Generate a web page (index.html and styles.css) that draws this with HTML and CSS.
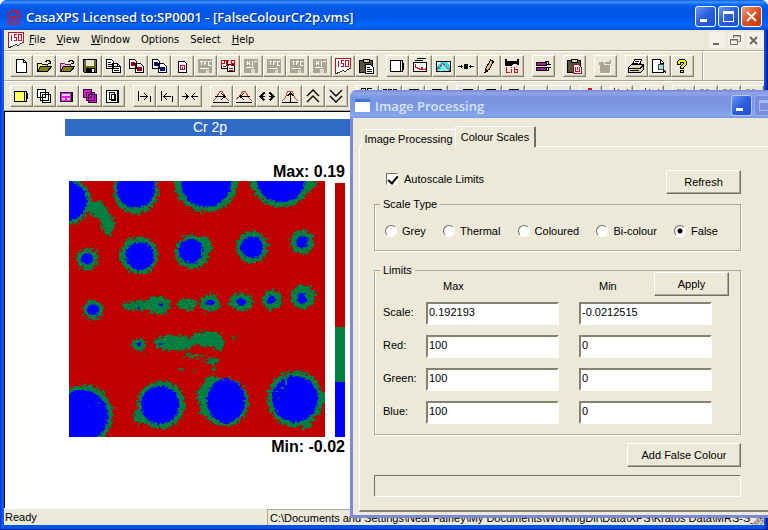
FILE: index.html
```
<!DOCTYPE html>
<html lang="en">
<head>
<meta charset="utf-8">
<title>CasaXPS</title>
<link rel="stylesheet" href="styles.css">
</head>
<body>
<svg class="defs" aria-hidden="true">
  <symbol id="new" viewBox="0 0 16 16"><path d="M3.500 1.500h7l3 3v10h-10z" fill="#fff" stroke="#000"/><path d="M10.500 1.500v3h3" fill="none" stroke="#000"/></symbol>
  <symbol id="open" viewBox="0 0 16 16"><path d="M1.500 13.500v-8h4l1 1h5v3" fill="#ffff80" stroke="#000"/><path d="M1.500 13.500l3-5h11l-4 5z" fill="#808000" stroke="#000"/><path d="M9 3.500h1l1-1h2l1 1v2M12 5.500h3M14.500 3v3" fill="none" stroke="#000"/></symbol>
  <symbol id="openp" viewBox="0 0 16 16"><path d="M1.500 13.500v-8h4l1 1h5v3" fill="#f6a8e8" stroke="#702070"/><path d="M1.500 13.500l3-5h11l-4 5z" fill="#808000" stroke="#000"/><path d="M9 3.500h1l1-1h2l1 1v2M12 5.500h3M14.500 3v3" fill="none" stroke="#000"/></symbol>
  <symbol id="save" viewBox="0 0 16 16"><path d="M1.500 1.500h13v13h-12l-1-1z" fill="#6b6b10" stroke="#000"/><path d="M4 2h8v6h-8z" fill="#e8e6d0"/><path d="M4 10h9v5h-9z" fill="#000"/><path d="M10 11h2v3h-2z" fill="#fff"/></symbol>
  <symbol id="copy" viewBox="0 0 16 16"><path d="M1.500 1.500h5l2 2v7h-7zM7.500 5.500h5l3 3v6h-8z" fill="#fff" stroke="#000"/><path d="M3 4.500h3M3 6.500h4M3 8.500h4M9 8.500h3M9 10.500h5M9 12.500h5M12.500 6v2.500h3" stroke="#000" fill="none"/></symbol>
  <symbol id="copyr" viewBox="0 0 16 16"><path d="M1.500 1.500h5l2 2v7h-7zM7.500 5.500h5l3 3v6h-8z" fill="#fff" stroke="#000"/><path d="M3 4h4v4h-4zM9 9h5v4h-5z" fill="#a00010"/></symbol>
  <symbol id="copyb" viewBox="0 0 16 16"><path d="M1.500 1.500h5l2 2v7h-7zM7.500 5.500h5l3 3v6h-8z" fill="#fff" stroke="#000"/><path d="M3 4h4v4h-4zM9 9h5v4h-5z" fill="#001080"/></symbol>
  <symbol id="doc" viewBox="0 0 16 16"><path d="M4.500 3.500h6l2 2v9h-8z" fill="#fff" stroke="#000"/><path d="M6.500 7.500h4v4h-4z" fill="none" stroke="#c00020"/><path d="M8 9h1v2h-1z" fill="#c00020"/></symbol>
  <symbol id="off" viewBox="0 0 16 16"><path d="M1 1h14v14h-14z" fill="#a9a694"/><path d="M3 3.500h3M4.500 3v4M7.500 7v-3.500h2M7 5.500h2M11 3.500h2.500M11.500 3v4.500h2M3 10.500h9" fill="none" stroke="#fff"/><path d="M9 12h3v3h-3z" fill="#dcd9c8"/></symbol>
  <symbol id="off2" viewBox="0 0 16 16"><path d="M1 1h14v14h-14z" fill="#a9a694"/><path d="M4.500 3v4M6.500 3v4M4 5.500h3M9.500 3v4.500M11 3.500h3M3 9.500h8" fill="none" stroke="#fff"/><path d="M8 11h4v4h-4z" fill="#dcd9c8"/></symbol>
  <symbol id="pcb" viewBox="0 0 16 16"><path d="M1.500 2.500h6v8h-6zM7.500 6.500h7v7h-7z" fill="#fff" stroke="#000"/><path d="M1.500 8v-5.500h3v3h-3M9 2.500h-2.500v5h2.500M11.500 8v-5.500h3v5h-3M11.500 5.500h3" fill="none" stroke="#d80010"/><path d="M9 10.500h4M3 8.500h3M9 12.500h4" stroke="#a00010"/></symbol>
  <symbol id="iso" viewBox="0 0 16 16"><path d="M.500 .500h15v10l-3 1-2 2-3-1-3 3-4-1z" fill="#fff"/><path d="M.500 15v-14.500h15v10" fill="none" stroke="#c01020"/><path d="M15.500 10.500l-3 1-2 2-3-1-3 2-4 1" fill="none" stroke="#333"/><path d="M3.500 2.500v6M8.500 2.500h-2.500v2.500h2v3h-2.500M10.500 2.500h3v5.500h-3z" fill="none" stroke="#d01028"/></symbol>
  <symbol id="paste" viewBox="0 0 16 16"><path d="M1.500 2.500h13v12h-13z" fill="#55543c" stroke="#000"/><path d="M5 1h6v3h-6z" fill="#ddd98c" stroke="#000"/><path d="M7.500 6.500h5l3 3v6h-8z" fill="#fff" stroke="#000"/><path d="M9 9.500h3M9 11.500h5M9 13.500h5" stroke="#000"/></symbol>
  <symbol id="pastem" viewBox="0 0 16 16"><path d="M1.500 2.500h13v12h-13z" fill="#55543c" stroke="#000"/><path d="M5 1h6v3h-6z" fill="#ddd98c" stroke="#000"/><path d="M7.500 6.500h5l3 3v6h-8z" fill="#fff" stroke="#a01020"/><path d="M9.500 8.500v5h4v-5M11.500 9v3" fill="none" stroke="#d01020"/></symbol>
  <symbol id="page" viewBox="0 0 16 16"><path d="M1.500 2.500h12v11h-12z" fill="#fff" stroke="#000"/><path d="M11.500 3v10M13.500 5h1v6h-1" fill="none" stroke="#000"/></symbol>
  <symbol id="chart" viewBox="0 0 16 16"><path d="M1.500 4.500h13v9h-13z" fill="#fff" stroke="#000"/><path d="M3 2.500h8M5 .500h9" stroke="#000"/><path d="M3.500 6v3h2v1h2v1h2v-2h1v2h3v-1" fill="none" stroke="#d01020"/></symbol>
  <symbol id="peak" viewBox="0 0 16 16"><path d="M1.500 3.500h14v10h-14z" fill="#20e0e8" stroke="#000"/><path d="M2 13l4-2 2-6 2 0 2 6 3 2z" fill="#80f0e8"/><path d="M2 11l3-2 3-4 3 4 4 4" stroke="#b04060" fill="none"/><path d="M2 4h4l-4 4zM15 4h-4l4 4z" fill="#d8fff8"/></symbol>
  <symbol id="dots" viewBox="0 0 16 16"><path d="M0 8.500h5M11 8.500h5M3.500 7v3M12.500 7v3" stroke="#000"/><path d="M6 6h4v5h-4z"/></symbol>
  <symbol id="pencil" viewBox="0 0 16 16"><path d="M4.500 11l5-9 3 1.500-5 9-3.500 2z" fill="#f0c060" stroke="#000"/><path d="M4 14v-3l3 1zM9 2h3v2z" fill="#000"/></symbol>
  <symbol id="lib" viewBox="0 0 16 16"><path d="M1 1h2v2h10v-2h2v6h-2v-1h-3l-3 2h-6z"/><path d="M2.500 9v5.500h3M7.500 11v4M7.500 9v1M10.500 9v5.500h3v-3h-3" fill="none" stroke="#d01020"/></symbol>
  <symbol id="batch" viewBox="0 0 16 16"><path d="M1.500 4.500h10v3h-10zM1.500 9.500h10v3h-10z" fill="#a020a0" stroke="#000"/><path d="M10 3.500h3v3M15.500 6h-4M13.500 10v2.500h-2M12 9.500h4" fill="none" stroke="#000"/></symbol>
  <symbol id="gift" viewBox="0 0 16 16"><path d="M3 7h10v8h-10zM2 4h5v3h-5zM8 4h3l3-3v5h-6z" fill="#a9a694"/><path d="M13 8v7h-9" fill="none" stroke="#fff"/></symbol>
  <symbol id="print" viewBox="0 0 16 16"><path d="M4.500 7l2-5.500h7l-2 5.500z" fill="#fff" stroke="#000"/><path d="M.500 9.500l3-3h12v5l-3 3h-12z" fill="#d8d4c0" stroke="#000"/><path d="M1 10.500h11l3-3M2 12.500h9M7 3.500h4M6 5.500h4" fill="none" stroke="#000"/><path d="M8 11h2v1h-2z" fill="#e8e000"/></symbol>
  <symbol id="preview" viewBox="0 0 16 16"><path d="M1.500 1.500h8l3 3v10h-11z" fill="#fff" stroke="#000"/><circle cx="10" cy="9" r="3" fill="#a0e0e0" stroke="#444"/><path d="M12 11l3 4M9.500 2v3h3" stroke="#000" fill="none"/></symbol>
  <symbol id="help" viewBox="0 0 16 16"><path d="M3.500 6.500v-3l2-2h5l2 2v3l-3 3v1h-3v-2l3-3v-1h-3v2zM6.500 12.500h3v2h-3z" fill="#f0f000" stroke="#000"/></symbol>
  <symbol id="yel" viewBox="0 0 16 16"><path d="M1.500 3.500h12v10h-12z" fill="#ffff60" stroke="#000"/><path d="M11.500 4v9M14 5v6" stroke="#000"/></symbol>
  <symbol id="stack" viewBox="0 0 16 16"><path d="M1.500 1.500h8v8h-8zM4.500 4.500h8v8h-8zM6.500 6.500h8v8h-8z" fill="#fff" stroke="#000"/></symbol>
  <symbol id="mag" viewBox="0 0 16 16"><path d="M1.500 4.500h12v9h-12z" fill="#e020e0" stroke="#401040"/><path d="M3 6h8v2h-8zM3 10h3v2h-3zM8 10h3v2h-3z" fill="#ffd0f8"/><path d="M12 4h2v10h-2z"/></symbol>
  <symbol id="magst" viewBox="0 0 16 16"><path d="M1.500 1.500h8v8h-8zM4.500 4.500h8v8h-8zM6.500 6.500h8v8h-8z" fill="#d818d8" stroke="#400040"/></symbol>
  <symbol id="nest" viewBox="0 0 16 16"><path d="M1.500 2.500h12v12h-12z" fill="#fff" stroke="#000"/><path d="M4.500 4.500h5v7h-5zM6.500 6.500h4v6h-4z" fill="#fff" stroke="#000"/><path d="M12 3h2v11h-2z"/></symbol>
  <symbol id="right" viewBox="0 0 16 16"><path d="M2.500 3v10M14.500 8v6M4 8.500h8M8 5l3.500 3.500-3.500 3.500" fill="none" stroke="#000"/></symbol>
  <symbol id="left" viewBox="0 0 16 16"><path d="M2.500 3v10M13.500 8v6M4 8.500h8M8 5l-3.500 3.500 3.500 3.500" fill="none" stroke="#000"/></symbol>
  <symbol id="inn" viewBox="0 0 16 16"><path d="M0 8.500h6M10 8.500h6M3 5l3 3.500-3 3.500M13 5l-3 3.500 3 3.500" fill="none" stroke="#000"/></symbol>
  <symbol id="pr" viewBox="0 0 16 16"><path d="M0 13l3-3 4-7h2l4 7 3 3" fill="none" stroke="#d04040"/><path d="M0 14.500h16M2 8.500h9M8 5l4 3.500-4 3.500" fill="none" stroke="#000"/></symbol>
  <symbol id="pl" viewBox="0 0 16 16"><path d="M0 11l3-2 4-6h2l4 7 3 3" fill="none" stroke="#d04040"/><path d="M0 14.500h16M5 8.500h9M8 5l-4 3.500 4 3.500" fill="none" stroke="#000"/></symbol>
  <symbol id="out" viewBox="0 0 16 16"><path d="M5.500 4.500l-4 4 4 4M10.500 4.500l4 4-4 4M2 8.500h4M10 8.500h4" fill="none" stroke="#000" stroke-width="1.500"/></symbol>
  <symbol id="pu" viewBox="0 0 16 16"><path d="M0 13l3-3 3-7h4l3 7 3 3" fill="none" stroke="#d04040"/><path d="M0 14.500h16M8.500 5v9M5.500 8l3-3 3 3" fill="none" stroke="#000"/></symbol>
  <symbol id="up" viewBox="0 0 16 16"><path d="M2 8l6-6 6 6M2 14l6-6 6 6" fill="none" stroke="#000" stroke-width="1.400"/></symbol>
  <symbol id="down" viewBox="0 0 16 16"><path d="M2 2l6 6 6-6M2 8l6 6 6-6" fill="none" stroke="#000" stroke-width="1.400"/></symbol>
  <symbol id="be" viewBox="0 0 16 16"><path d="M2.500 7v-6.500h4v6M8 .500h5M8.500 1v6M8 4.500h4" fill="none" stroke="#000"/></symbol>
  <symbol id="fft" viewBox="0 0 16 16"><path d="M1 1.500h4M6 1.500h4M11 1.500h4M1.500 2v4M6.500 2v4M13.500 2v4" fill="none" stroke="#000"/></symbol>
  <symbol id="bar" viewBox="0 0 16 16"><path d="M4 1.500h10M5.500 2v5M12.500 2v5" fill="none" stroke="#000"/></symbol>
  <symbol id="pkred" viewBox="0 0 16 16"><path d="M3 8l4-7h2l4 7" fill="none" stroke="#d02020" stroke-width="2"/></symbol>
  <symbol id="nt" viewBox="0 0 16 16"><path d="M1.500 7v-6l4 6v-6M14.500 1v6" fill="none" stroke="#802020"/><path d="M8 2h3v2h-3z" fill="#c02020"/></symbol>
  <symbol id="dim" viewBox="0 0 16 16"><path d="M2 1.500h4M8 1.500h3M2.500 2v5M8.500 2v5M13.500 2v5" fill="none" stroke="#9c9986"/></symbol>
</svg>

<div class="window">
  <header class="titlebar">
    <svg class="logo" viewBox="0 0 16 16"><path d="M2.500 15v-8l-1-1 6-5 3 3v-2h2v4l2 1-2 1v7z" fill="none" stroke="#d01830" stroke-width="1.500"/><path d="M5 8h5M5 11h5" stroke="#d01830" stroke-width="2"/></svg>
    <h1>CasaXPS Licensed to:SP0001 - [FalseColourCr2p.vms]</h1>
    <button class="cap" aria-label="Minimize"><svg viewBox="0 0 19 19"><path d="M4 12h7v3h-7z" fill="#fff"/></svg></button>
    <button class="cap" aria-label="Maximize"><svg viewBox="0 0 19 19"><path d="M4 4h11v11h-11zM5 7v7h9v-7z" fill="#fff" fill-rule="evenodd"/></svg></button>
    <button class="cap close" aria-label="Close"><svg viewBox="0 0 19 19"><path d="M5 5l9 9M14 5l-9 9" stroke="#fff" stroke-width="2"/></svg></button>
  </header>

  <div class="inner">
    <nav class="menubar">
      <svg class="ico" viewBox="0 0 16 16"><use href="#iso"/></svg>
      <a href="#"><u>F</u>ile</a><a href="#"><u>V</u>iew</a><a href="#"><u>W</u>indow</a><a href="#">Options</a><a href="#">Select</a><a href="#"><u>H</u>elp</a>
      <span class="mdi">
        <button aria-label="Minimize document"><svg viewBox="0 0 15 15"><path d="M4 10h6v2h-6z"/></svg></button>
        <button aria-label="Restore document"><svg viewBox="0 0 15 15"><path d="M5.500 5v-2.500h7v6h-2M5 3h8M2.500 6.500h7v5h-7zM2 7h8" fill="none" stroke="#6b6a5c"/></svg></button>
        <button aria-label="Close document"><svg viewBox="0 0 15 15"><path d="M3 4l7 7M10 4l-7 7" stroke="#6b6a5c" stroke-width="2"/></svg></button>
      </span>
    </nav>

    <div class="toolbar">
      <div class="group">
        <button aria-label="New"><svg class="ico"><use href="#new"/></svg></button>
        <button aria-label="Open"><svg class="ico"><use href="#open"/></svg></button>
        <button aria-label="Open and convert"><svg class="ico"><use href="#openp"/></svg></button>
        <button aria-label="Save"><svg class="ico"><use href="#save"/></svg></button>
        <button aria-label="Copy"><svg class="ico"><use href="#copy"/></svg></button>
        <button aria-label="Copy red"><svg class="ico"><use href="#copyr"/></svg></button>
        <button aria-label="Copy blue"><svg class="ico"><use href="#copyb"/></svg></button>
        <button aria-label="Document"><svg class="ico"><use href="#doc"/></svg></button>
        <button aria-label="Save TAG"><svg class="ico"><use href="#off"/></svg></button>
        <button aria-label="Copy blocks"><svg class="ico"><use href="#pcb"/></svg></button>
        <button aria-label="Save heights"><svg class="ico"><use href="#off2"/></svg></button>
        <button aria-label="Save VE"><svg class="ico"><use href="#off"/></svg></button>
        <button aria-label="Save KE"><svg class="ico"><use href="#off"/></svg></button>
        <button aria-label="Save TT"><svg class="ico"><use href="#off2"/></svg></button>
        <button aria-label="ISO"><svg class="ico"><use href="#iso"/></svg></button>
        <button aria-label="Paste"><svg class="ico"><use href="#paste"/></svg></button>
      </div>
      <div class="group">
        <button aria-label="Page"><svg class="ico"><use href="#page"/></svg></button>
        <button aria-label="Spectrum"><svg class="ico"><use href="#chart"/></svg></button>
        <button aria-label="Peaks"><svg class="ico"><use href="#peak"/></svg></button>
        <button aria-label="Range"><svg class="ico"><use href="#dots"/></svg></button>
        <button aria-label="Annotate"><svg class="ico"><use href="#pencil"/></svg></button>
        <button aria-label="Library"><svg class="ico"><use href="#lib"/></svg></button>
      </div>
      <div class="group"><button aria-label="Batch"><svg class="ico"><use href="#batch"/></svg></button></div>
      <div class="group"><button aria-label="Paste macro"><svg class="ico"><use href="#pastem"/></svg></button></div>
      <div class="group"><button aria-label="Package"><svg class="ico"><use href="#gift"/></svg></button></div>
      <div class="group">
        <button aria-label="Print"><svg class="ico"><use href="#print"/></svg></button>
        <button aria-label="Print preview"><svg class="ico"><use href="#preview"/></svg></button>
        <button aria-label="Help"><svg class="ico"><use href="#help"/></svg></button>
      </div>
      <span class="sep"></span>
    </div>

    <div class="toolbar">
      <div class="group">
        <button aria-label="Single tile"><svg class="ico"><use href="#yel"/></svg></button>
        <button aria-label="Stack"><svg class="ico"><use href="#stack"/></svg></button>
        <button aria-label="Tiles"><svg class="ico"><use href="#mag"/></svg></button>
        <button aria-label="Stack tiles"><svg class="ico"><use href="#magst"/></svg></button>
        <button aria-label="Nested"><svg class="ico"><use href="#nest"/></svg></button>
      </div>
      <div class="group">
        <button aria-label="Step right"><svg class="ico"><use href="#right"/></svg></button>
        <button aria-label="Step left"><svg class="ico"><use href="#left"/></svg></button>
        <button aria-label="Zoom in"><svg class="ico"><use href="#inn"/></svg></button>
      </div>
      <div class="group">
        <button aria-label="Shift right"><svg class="ico"><use href="#pr"/></svg></button>
        <button aria-label="Shift left"><svg class="ico"><use href="#pl"/></svg></button>
        <button aria-label="Widen"><svg class="ico"><use href="#out"/></svg></button>
        <button aria-label="Raise"><svg class="ico"><use href="#pu"/></svg></button>
        <button aria-label="Up"><svg class="ico smooth"><use href="#up"/></svg></button>
        <button aria-label="Down"><svg class="ico smooth"><use href="#down"/></svg></button>
      </div>
      <div class="group">
        <button aria-label="Energy"><svg class="ico"><use href="#be"/></svg></button>
        <button aria-label="Transform"><svg class="ico"><use href="#fft"/></svg></button>
        <button aria-label="Line"><svg class="ico"><use href="#bar"/></svg></button>
        <button aria-label="Table"><svg class="ico"><use href="#bar"/></svg></button>
      </div>
      <div class="group">
        <button aria-label="Columns"><svg class="ico"><use href="#bar"/></svg></button>
        <button aria-label="Rows"><svg class="ico"><use href="#bar"/></svg></button>
        <button aria-label="Cells"><svg class="ico"><use href="#bar"/></svg></button>
        <button aria-label="Blank"></button>
        <button aria-label="Blank"></button>
      </div>
      <div class="group"><button aria-label="Fit"><svg class="ico"><use href="#pkred"/></svg></button></div>
      <div class="group"><button aria-label="Net"><svg class="ico"><use href="#nt"/></svg></button></div>
      <div class="group"><button aria-label="Next"><svg class="ico"><use href="#nt"/></svg></button></div>
      <div class="group">
        <button aria-label="One"><svg class="ico"><use href="#dim"/></svg></button>
        <button aria-label="Two"><svg class="ico"><use href="#dim"/></svg></button>
        <button aria-label="Three"><svg class="ico"><use href="#dim"/></svg></button>
        <button aria-label="Four"><svg class="ico"><use href="#dim"/></svg></button>
      </div>
    </div>

    <main class="view">
      <section class="plot">
        <h2>Cr 2p</h2>
        <div class="figure">
          <p class="bound">Max: 0.19</p>
          <div class="maps">
            <svg class="map" viewBox="69 181 256 256" role="img" aria-label="Cr 2p map">
              <defs>
                <filter id="rough" x="-5%" y="-5%" width="110%" height="110%" color-interpolation-filters="sRGB"><feTurbulence type="fractalNoise" baseFrequency="0.32" numOctaves="3" seed="7"/><feDisplacementMap in="SourceGraphic" scale="10" xChannelSelector="R" yChannelSelector="G"/></filter>
                <filter id="rough2" x="-5%" y="-5%" width="110%" height="110%" color-interpolation-filters="sRGB"><feTurbulence type="fractalNoise" baseFrequency="0.4" numOctaves="2" seed="3"/><feDisplacementMap in="SourceGraphic" scale="6" xChannelSelector="R" yChannelSelector="G"/></filter>
              </defs>
              <path d="M69 181h256v256h-256z" fill="#c00000"/>
              <g fill="#008040" stroke="#008040" stroke-width="2" filter="url(#rough)">
                <circle cx="67" cy="201" r="23"/>
                <path d="M86 203l14-1 5 5 2 7 7 6-1 8-4 8-4-4-3-9-5-7-9-5z"/>
                <circle cx="136" cy="191" r="22"/><ellipse cx="206" cy="183" rx="31" ry="28"/><ellipse cx="281" cy="179" rx="30" ry="27"/><circle cx="310" cy="184" r="5"/>
                <circle cx="87" cy="259" r="10"/><circle cx="139" cy="255" r="18"/><circle cx="192" cy="252" r="16"/><ellipse cx="204" cy="247" rx="7" ry="9"/><circle cx="252" cy="247" r="15"/><circle cx="302" cy="242" r="11"/>
                <circle cx="93" cy="310" r="9"/><ellipse cx="143" cy="306" rx="20" ry="4"/><ellipse cx="158" cy="305" rx="12" ry="8"/><ellipse cx="187" cy="304" rx="9" ry="5"/><ellipse cx="210" cy="303" rx="9" ry="8"/><ellipse cx="241" cy="302" rx="11" ry="8"/><circle cx="272" cy="300" r="9"/><circle cx="303" cy="297" r="11"/>
                <circle cx="139" cy="345" r="6"/><ellipse cx="174" cy="343" rx="19" ry="7"/><ellipse cx="207" cy="339" rx="16" ry="7"/><ellipse cx="219" cy="345" rx="4" ry="6"/><ellipse cx="197" cy="356" rx="7" ry="1"/><ellipse cx="213" cy="361" rx="7" ry="2"/><circle cx="187" cy="355" r="1"/><circle cx="181" cy="369" r="1"/><circle cx="194" cy="371" r="1"/><circle cx="235" cy="338" r="1"/><circle cx="213" cy="367" r="1"/>
                <circle cx="83" cy="415" r="29"/><circle cx="161" cy="405" r="23"/><circle cx="140" cy="417" r="6"/><circle cx="225" cy="402" r="23"/><path d="M210 376l12 4-4 40-16-5-2-12-3-10 7-10z"/><circle cx="295" cy="399" r="27"/><circle cx="306" cy="423" r="5"/><circle cx="317" cy="398" r="8"/>
              </g>
              <g fill="#0000ff" filter="url(#rough2)">
                <circle cx="67" cy="201" r="20"/><circle cx="136" cy="189" r="19"/><ellipse cx="206" cy="182" rx="25" ry="25"/><ellipse cx="281" cy="180" rx="24" ry="22"/>
                <circle cx="87" cy="259" r="6"/><circle cx="140" cy="256" r="14"/><circle cx="191" cy="251" r="12"/><circle cx="252" cy="247" r="11"/><circle cx="302" cy="242" r="6"/>
                <circle cx="93" cy="310" r="6"/><circle cx="138" cy="307" r="1"/><ellipse cx="161" cy="305" rx="3" ry="2"/><ellipse cx="210" cy="303" rx="5" ry="2"/><circle cx="241" cy="302" r="4"/><circle cx="272" cy="300" r="4"/><circle cx="302" cy="299" r="5"/>
                <circle cx="139" cy="345" r="2"/><ellipse cx="161" cy="344" rx="2" ry="1"/>
                <circle cx="82" cy="416" r="26"/><circle cx="160" cy="405" r="19"/><ellipse cx="226" cy="401" rx="19" ry="22"/><circle cx="295" cy="399" r="23"/>
              </g>
              <g fill="#008040"><path d="M273 381h2v4h-2zM281 387h3v2h-3zM285 379h2v6h-2zM276 391h2v1h-2zM278 397h1v2h-1zM88 406h1v1h-1zM201 254h2v2h-2zM198 259h2v2h-2zM201 248h1v4h-1zM98 402h1v2h-1z"/></g>
            </svg>
            <div class="scalebar"><i class="red"></i><i class="green"></i><i class="blue"></i></div>
          </div>
          <p class="bound">Min: -0.02</p>
        </div>
      </section>
    </main>

    <footer class="status"><span class="ready">Ready</span><span class="path">C:\Documents and Settings\Neal Fairley\My Documents\WorkingDir\Data\XPS\Kratos Data\MRS-S_R</span>
      <svg class="grip" viewBox="0 0 12 12"><path d="M0 12L12 0M4 12l8-8M8 12l4-4" stroke="#a9a694" stroke-width="2"/></svg>
    </footer>
  </div>
</div>

<div class="dialog" role="dialog" aria-labelledby="dlg-title">
  <header class="dlg-title">
    <span class="dlg-icon"></span>
    <h2 id="dlg-title">Image Processing</h2>
    <button class="cap" aria-label="Minimize"><svg viewBox="0 0 19 19"><path d="M4 12h7v3h-7z" fill="#fff"/></svg></button>
    <button class="cap faded" aria-label="Maximize"><svg viewBox="0 0 19 19"><path d="M4 4h11v11h-11zM5 7v7h9v-7z" fill="#a9b8f2" fill-rule="evenodd"/></svg></button>
  </header>
  <form class="dlg-body">
    <div class="tabs" role="tablist">
      <button type="button" role="tab" class="tab">Image Processing</button><button type="button" role="tab" class="tab active" aria-selected="true">Colour Scales</button>
    </div>
    <div class="sheet">
      <div class="toprow">
        <label class="check"><input type="checkbox" checked>Autoscale Limits</label>
        <button type="button" class="btn">Refresh</button>
      </div>
      <fieldset class="types">
        <legend>Scale Type</legend>
        <label><input type="radio" name="type">Grey</label>
        <label><input type="radio" name="type">Thermal</label>
        <label><input type="radio" name="type">Coloured</label>
        <label><input type="radio" name="type">Bi-colour</label>
        <label><input type="radio" name="type" checked>False</label>
      </fieldset>
      <fieldset class="limits">
        <legend>Limits</legend>
        <div class="heads"><span class="h-max">Max</span><span class="h-min">Min</span><button type="button" class="btn">Apply</button></div>
        <div class="rows">
          <label for="s1">Scale:</label><input id="s1" type="text" value="0.192193"><input aria-label="Scale min" type="text" value="-0.0212515">
          <label for="r1">Red:</label><input id="r1" type="text" value="100"><input aria-label="Red min" type="text" value="0">
          <label for="g1">Green:</label><input id="g1" type="text" value="100"><input aria-label="Green min" type="text" value="0">
          <label for="b1">Blue:</label><input id="b1" type="text" value="100"><input aria-label="Blue min" type="text" value="0">
        </div>
      </fieldset>
      <button type="button" class="btn wide">Add False Colour</button>
      <div class="message"></div>
    </div>
  </form>
</div>
</body>
</html>
```
FILE: styles.css
```
* { box-sizing: border-box; }
html, body { height: 100%; }
body { margin: 0; position: relative; overflow: hidden; background: #fff; color: #000; font: 11px/14px "Liberation Sans", Arial, sans-serif; }
h1, h2, p { margin: 0; }
button, input { font: inherit; color: inherit; margin: 0; padding: 0; border-radius: 0; }
svg { display: block; }
.defs { position: absolute; width: 0; height: 0; }
.ico { width: 16px; height: 16px; shape-rendering: crispEdges; }
.ico.smooth { shape-rendering: auto; }

/* main window */
.window { height: 100%; display: flex; flex-direction: column; padding: 0 4px 4px; background: linear-gradient(90deg, #0831d9, #1660f0 3px, #0453e8 4px, #0453e8 calc(100% - 4px), #0a4ae0 calc(100% - 3px), #00138c); border-radius: 7px 7px 0 0; border-bottom: 1px solid #001a9c; }
.titlebar { display: flex; align-items: center; gap: 2px; height: 30px; flex: none; margin: 0 -4px; padding: 3px 6px 0; border-radius: 7px 7px 0 0; background: linear-gradient(#0f5be0, #3c94ff 2px, #0a60ee 5px, #0055e4 10px, #0058ec 18px, #0066ff 25px, #0060f8 28px, #0045c8); }
.titlebar .logo { width: 16px; height: 16px; margin-right: 2px; }
h1 { flex: 1; font: 600 13px/18px "Open Sans", "Noto Sans", sans-serif; color: #fff; text-shadow: 1px 1px #0a2a80; white-space: nowrap; }
.cap { width: 21px; height: 21px; flex: none; border: 1px solid #fff; border-radius: 3px; background: linear-gradient(135deg, #6a94f4, #2a5ee0 50%, #2050d0); }
.cap svg { width: 19px; height: 19px; }
.cap.close { background: linear-gradient(135deg, #f0a080, #dc4c20 50%, #c03808); }
.inner { flex: 1; min-height: 0; display: flex; flex-direction: column; background: #ece9d8; }

.menubar { display: flex; align-items: center; height: 21px; flex: none; padding: 0 1px 0 4px; font: 11px/14px "DejaVu Sans Condensed", "Noto Sans", sans-serif; border-bottom: 1px solid #aca899; }
.menubar a { color: #000; text-decoration: none; margin-right: 11px; }
.menubar .ico { margin-right: 5px; }
.mdi { margin-left: auto; display: flex; gap: 3px; }
.mdi button { width: 16px; height: 16px; border: 0; background: #f4f2e8; }
.mdi svg { width: 15px; height: 15px; fill: #6b6a5c; }

.toolbar { display: flex; align-items: center; gap: 8px; height: 30px; flex: none; padding: 0 0 0 6px; border-top: 1px solid #fff; border-bottom: 1px solid #aca899; overflow: hidden; }
.group { display: flex; flex: none; }
.group button { width: 23px; height: 22px; padding: 0 0 1px 2px; border: 1px solid; border-color: #fff #85826f #85826f #fff; box-shadow: inset -1px -1px #c4c0ac; background: #ece9d8; }
.sep { width: 2px; height: 100%; border-left: 1px solid #aca899; background: #fff; }

.view { flex: 1; min-height: 0; overflow: hidden; padding: 7px 0 0 60px; border: 1px solid #000; border-width: 1px 0 0 1px; background: #fff; }
.plot { width: 290px; }
.plot h2 { font: 14px/17px "Liberation Sans", Arial, sans-serif; color: #fff; text-align: center; background: #316ac5; }
.figure { width: 276px; margin: 26px 0 0 4px; }
.bound { font: bold 16px/19px "Liberation Sans", Arial, sans-serif; text-align: right; }
.maps { display: flex; justify-content: space-between; }
.map { width: 256px; height: 256px; }
.scalebar { width: 10px; display: flex; flex-direction: column; padding-top: 2px; }
.scalebar i { flex: 55; }
.scalebar .red { flex: 144; background: #c00000; }
.scalebar .green { background: #008040; }
.scalebar .blue { background: #0000ff; }

.status { display: flex; align-items: stretch; gap: 4px; height: 17px; flex: none; font: 11px/16px "Liberation Sans", Arial, sans-serif; border-top: 1px solid #fff; }
.ready { flex: none; width: 259px; padding-left: 1px; }
.path { flex: 1; min-width: 0; white-space: nowrap; padding-left: 2px; border-left: 1px solid #aca899; border-top: 1px solid #aca899; }
.grip { flex: none; width: 12px; height: 12px; align-self: flex-end; }

/* floating dialog */
.dialog { position: absolute; left: 350px; right: 0; top: 90px; bottom: 12px; display: flex; flex-direction: column; padding: 0 0 3px 3px; background: #7b89d8; border-radius: 7px 0 0 0; }
.dlg-title { display: flex; align-items: center; gap: 2px; height: 28px; flex: none; margin-left: -3px; padding: 3px 0 0 5px; border-radius: 7px 0 0 0; background: linear-gradient(#7488d8, #90a4ea 3px, #7a94e0 8px, #7c98e4 18px, #84a8f0 26px, #7890dc); overflow: hidden; }
.dlg-icon { width: 15px; height: 13px; margin-right: 3px; background: #fff; border-top: 3px solid #3c78d8; }
.dlg-title h2 { flex: 1; font: 600 13px/18px "Open Sans", "Noto Sans", sans-serif; color: #d8e4f8; }
.dlg-title .cap { border-color: #b8c8f8; }
.dlg-title .faded { margin-right: -7px; background: #7a8ee0; border-color: #9aacee; }
.dlg-body { flex: 1; display: flex; flex-direction: column; padding: 8px 0 3px 6px; background: #ece9d8; }
.tabs { display: flex; align-items: flex-end; height: 21px; padding-left: 2px; margin-bottom: -1px; position: relative; }
.tab { height: 18px; width: 94px; border: 1px solid #fff; border-width: 1px 0 0 1px; border-radius: 2px 0 0 0; background: #ece9d8; }
.tab.active { width: 81px; height: 21px; border-right: 2px solid #716f64; border-radius: 2px 2px 0 0; }
.sheet { flex: 1; padding: 23px 27px 0 14px; border: 1px solid #fff; border-width: 1px 0 0 1px; border-bottom: 2px solid #85826f; }
.toprow { display: flex; justify-content: space-between; padding-left: 12px; }
.btn { display: block; width: 75px; height: 24px; border: 1px solid; border-color: #fff #716f64 #716f64 #fff; box-shadow: inset -1px -1px #aca899; background: #ece9d8; }
.btn.wide { width: 114px; margin: 8px 0 8px auto; }
.check { display: flex; align-items: center; gap: 6px; height: 18px; }
input[type=checkbox] { appearance: none; width: 12px; height: 12px; border: 1px solid; border-color: #716f64 #fff #fff #716f64; background: #fff; position: relative; }
input[type=checkbox]:checked::after { content: ""; position: absolute; left: 3px; top: 0; width: 4px; height: 8px; border: solid #000; border-width: 0 2px 2px 0; transform: rotate(40deg); }
input[type=radio] { appearance: none; width: 12px; height: 12px; margin-left: 2px; border-radius: 50%; border: 1px solid; border-color: #716f64 #fff #fff #716f64; background: #fff; }
input[type=radio]:checked { background: radial-gradient(#000 2px, #fff 3px); }
fieldset { margin: 0; border: 1px solid #aca899; box-shadow: inset 1px 0 #fff, 1px 1px #fff; min-width: 0; }
legend { padding: 0 3px; margin-left: -3px; }
.types { display: flex; justify-content: space-between; height: 54px; margin-top: 3px; padding: 12px 22px 0 8px; }
.types label { display: flex; align-items: center; gap: 5px; height: 16px; }
.limits { margin-top: 12px; padding: 0 11px 10px 8px; }
.heads { display: flex; height: 27px; align-items: center; margin-top: -5px; }
.h-max { padding-left: 60px; width: 216px; }
.h-min { flex: 1; }
.heads .btn { align-self: flex-start; }
.rows { display: grid; grid-template-columns: 43px 133px 133px; row-gap: 10px; margin-top: 3px; }
.rows label { line-height: 20px; }
.rows input { height: 23px; width: 100%; padding: 0 1px 4px; border: 2px solid; border-color: #85826f #fff #fff #85826f; background: #fff; }
.rows input:nth-child(3n) { justify-self: end; margin-right: -20px; width: 133px; }
.message { height: 22px; border: 1px solid; border-color: #716f64 #fff #fff #716f64; }
```
